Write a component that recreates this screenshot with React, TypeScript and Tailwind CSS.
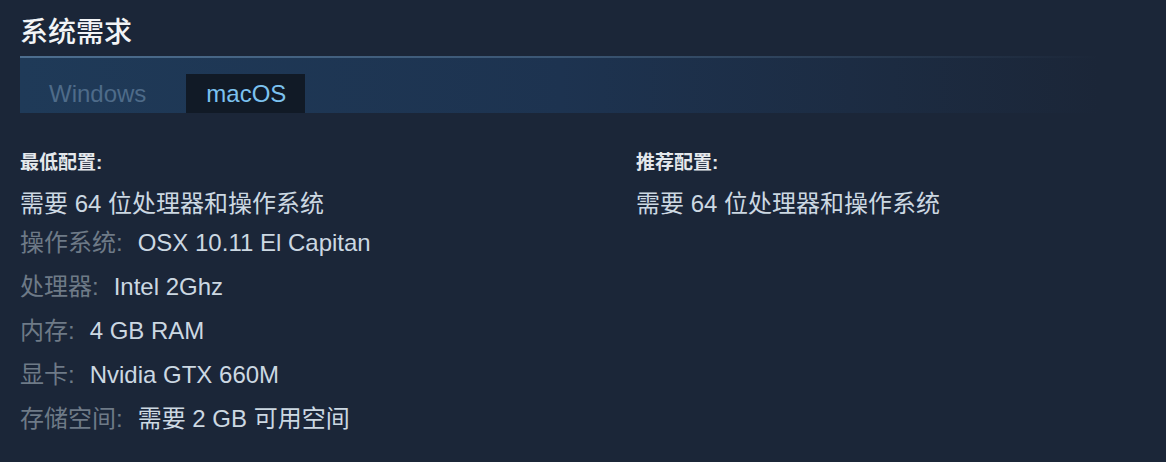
import React from "react";

const font = { fontFamily: '"Liberation Sans", "Noto Sans CJK SC", sans-serif' };

interface Spec {
  label?: string;
  value: string;
}

const minSpecs: Spec[] = [
  { label: "操作系统:", value: "OSX 10.11 El Capitan" },
  { label: "处理器:", value: "Intel 2Ghz" },
  { label: "内存:", value: "4 GB RAM" },
  { label: "显卡:", value: "Nvidia GTX 660M" },
  { label: "存储空间:", value: "需要 2 GB 可用空间" },
];

const Column: React.FC<{ title: string; specs: Spec[]; className?: string }> = ({
  title,
  specs,
  className,
}) => {
  return (
    <div className={className}>
      <div className="text-[19px] leading-[24px] font-bold text-[#e4e8ec]">{title}</div>
      <div className="mt-3 text-[24px] leading-[34px] text-[#ccd8e2] whitespace-nowrap">
        需要 64 位处理器和操作系统
      </div>
      {specs.map((s) => (
        <div key={s.label} className="text-[24px] leading-[44px] whitespace-nowrap">
          <span className="text-[#6e7a87]">{s.label}</span>
          <span className="ml-[15px] text-[#ccd8e2]">{s.value}</span>
        </div>
      ))}
    </div>
  );
};

export default function App() {
  return (
    <div style={font} className="w-[1166px] h-[462px] bg-[#1b2638] overflow-hidden pl-5 pr-[66px] pt-4">
      <h2 className="text-[28px] leading-[34px] font-medium text-[#f2f4f6]">系统需求</h2>

      <div className="mt-[6px] h-[2px] bg-gradient-to-r from-[#4d6e8f] via-[#3b5674] to-transparent" />
      <div className="h-[55px] flex items-end gap-[20px] pl-[9px] bg-gradient-to-r from-[#1f3a58] via-[#1d3350] to-[#1b2638]">
        <div className="h-[39px] px-5 flex items-center text-[24px] text-[#4e6b89]">Windows</div>
        <div className="h-[39px] pl-5 pr-[19px] flex items-center text-[24px] text-[#7cc2ef] bg-[#111a26]">
          macOS
        </div>
      </div>

      <div className="mt-[38px] flex">
        <Column title="最低配置:" specs={minSpecs} className="w-[616px]" />
        <Column title="推荐配置:" specs={[]} />
      </div>
    </div>
  );
}
